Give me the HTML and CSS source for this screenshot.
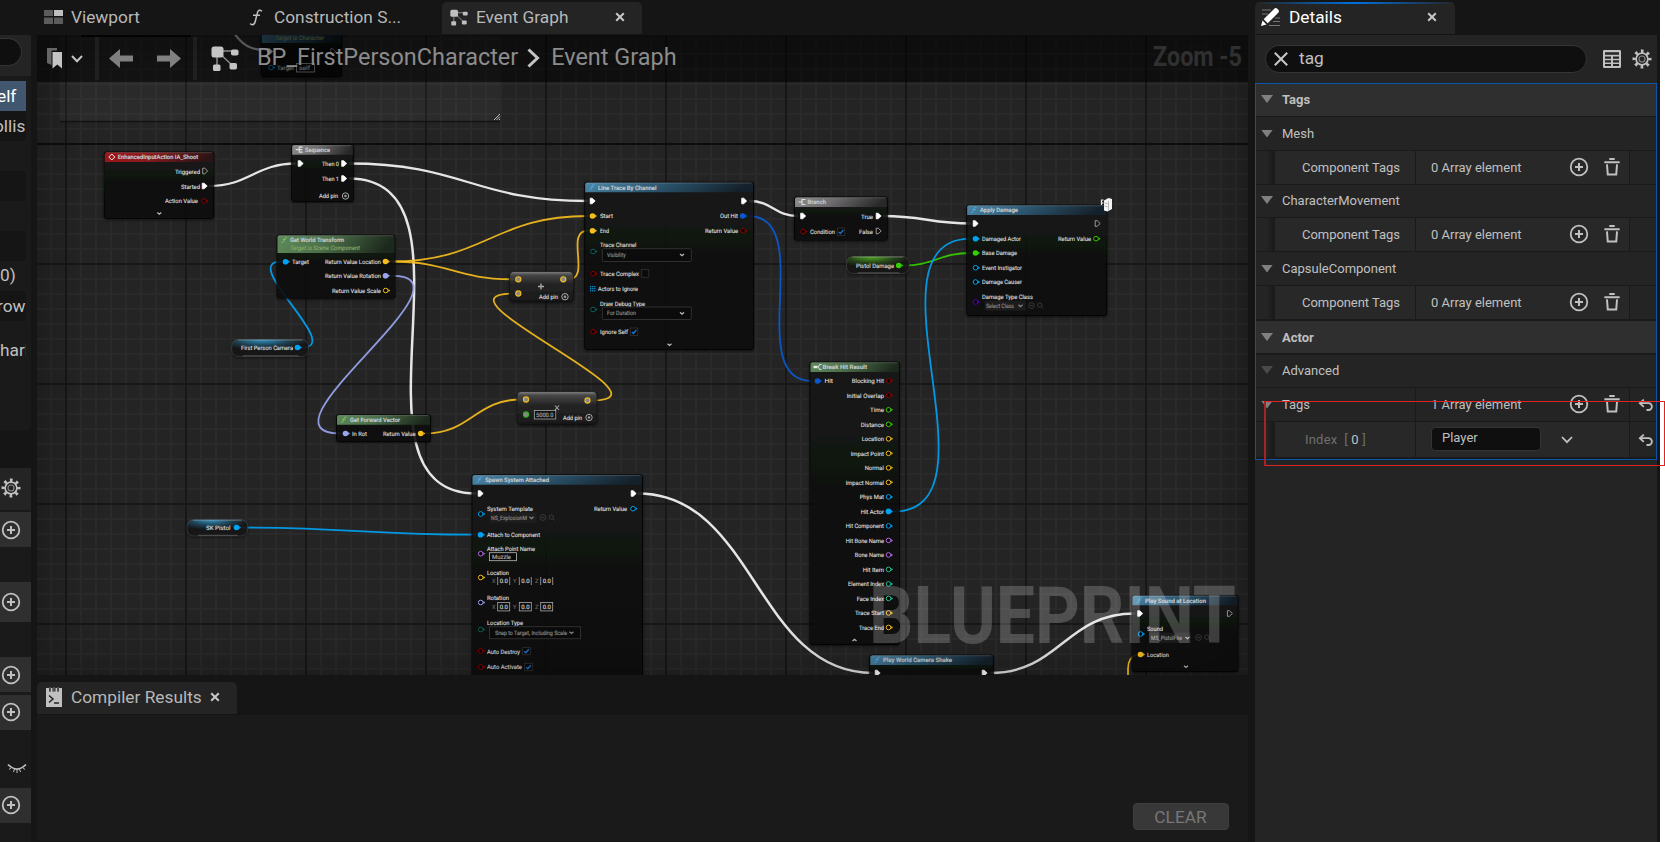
FILE: index.html
```html
<!DOCTYPE html>
<html lang="en">
<head>
<meta charset="utf-8">
<title>BP_FirstPersonCharacter</title>
<link rel="stylesheet" href="styles.css">
</head>
<body>
<svg class="defs" width="0" height="0">
  <symbol id="i-plus" viewBox="0 0 20 20"><circle cx="10" cy="10" r="8.3" fill="none" stroke="#c0c0c0" stroke-width="1.8"/><path d="M10 6v8M6 10h8" stroke="#c0c0c0" stroke-width="2"/></symbol>
  <symbol id="i-trash" viewBox="0 0 20 20"><path d="M7 1.2h6M1.5 4.6h17" stroke="#c0c0c0" stroke-width="2.2"/><path d="M4.4 7l.9 11.4h9.4L15.6 7" fill="none" stroke="#c0c0c0" stroke-width="2.2"/></symbol>
  <symbol id="i-gear" viewBox="0 0 20 20"><circle cx="10" cy="10" r="7.7" fill="none" stroke="#c0c0c0" stroke-width="3.6" stroke-dasharray="2.6 3.447" stroke-dashoffset="1.3"/><circle cx="10" cy="10" r="5.9" fill="none" stroke="#c0c0c0" stroke-width="1.7"/><circle cx="10" cy="10" r="3" fill="none" stroke="#8a8a8a" stroke-width="1.1"/></symbol>
  <symbol id="i-x" viewBox="0 0 10 10"><path d="M1.2 1.2l7.6 7.6M8.8 1.2L1.2 8.8" stroke="#c8c8c8" stroke-width="2"/></symbol>
  <symbol id="i-graph" viewBox="0 0 28 25"><path d="M6 5h17M6 5v17M6 5l16 15" fill="none" stroke="#8a8a8a" stroke-width="1.5"/><rect x="0.5" y="0.5" width="12" height="11" rx="2.5"/><rect x="20" y="3.5" width="7.5" height="6" rx="1.8"/><rect x="18.5" y="17" width="7.5" height="6.5" rx="1.8"/><rect x="2" y="18.5" width="7.5" height="6.5" rx="1.5"/></symbol>
  <symbol id="i-reset" viewBox="0 0 16 12"><path d="M2 4.2h8.500a3.400 3.400 0 0 1 0 6.800H8.500" fill="none" stroke="#c0c0c0" stroke-width="1.800"/><path d="M5.800.6L1.800 4.200l4 3.600" fill="none" stroke="#c0c0c0" stroke-width="1.800"/></symbol>
</svg>

<div class="editor">
  <aside class="side">
    <div class="side-search"><div class="side-field"></div></div>
    <div class="tree">
      <div class="tree-row selected">elf</div>
      <div class="tree-row alt t-ollis">ollis</div>
      <div class="tree-row"></div>
      <div class="tree-row alt"></div>
      <div class="tree-row"></div>
      <div class="tree-row alt"></div>
      <div class="tree-row t0">0)</div>
      <div class="tree-row alt t1">row</div>
      <div class="tree-row tall">harl</div>
    </div>
    <div class="side-block gear"><svg width="20" height="20"><use href="#i-gear"/></svg></div>
    <div class="side-block add s1"><svg width="20" height="20"><use href="#i-plus"/></svg></div>
    <div class="side-block add s2"><svg width="20" height="20"><use href="#i-plus"/></svg></div>
    <div class="side-block add s3"><svg width="20" height="20"><use href="#i-plus"/></svg></div>
    <div class="side-block add s4"><svg width="20" height="20"><use href="#i-plus"/></svg></div>
    <div class="side-eye"><svg width="20" height="12" viewBox="0 0 20 12"><path d="M1 1.500q9 9 18 0" fill="none" stroke="#c0c0c0" stroke-width="1.700"/><path d="M4.500 4.500L2 6.500M7.500 6L6.500 9M10 6.500V10M12.500 6L13.500 9M15.500 4.500L18 6.500" stroke="#c0c0c0" stroke-width="1"/></svg></div>
    <div class="side-block add s5"><svg width="20" height="20"><use href="#i-plus"/></svg></div>
  </aside>

  <main class="center">
    <nav class="tabs">
      <div class="tab viewport">
        <svg width="19" height="14"><path fill="#5c5c5c" d="M0 0h9v6H0zM0 7.500h9V14H0zM10 7.500h9V14h-9z"/><path fill="#c0c0c0" d="M10 0h9v6h-9z"/></svg>
        <span>Viewport</span>
      </div>
      <div class="tab construct">
        <svg width="14" height="17" viewBox="0 0 14 17"><path d="M12.800 2.300Q12 .8 10.200 1.300 8.800 1.800 8.200 4.500L6.300 12.200Q5.500 15.600 3.400 15.700 1.800 15.700 1.200 14.500M4 6.300h7" fill="none" stroke="#c0c0c0" stroke-width="1.500"/></svg>
        <span>Construction S...</span>
      </div>
      <div class="tab active">
        <svg width="18" height="17" fill="#c0c0c0"><use href="#i-graph"/></svg>
        <span>Event Graph</span>
        <svg class="close" width="10" height="10"><use href="#i-x"/></svg>
      </div>
    </nav>
    <section class="canvas">
      <svg id="graph" viewBox="37 35 1211 640" width="1211" height="640"></svg>
      <div class="vignette"></div>
      <div class="toolbar">
        <svg class="book" width="16" height="21" viewBox="0 0 16 21"><path fill="#666" d="M0 0h10v2.500H4.500V17L0 15z"/><path fill="#c4c4c4" d="M5.500 4h9.500v16.500l-4.700-4-4.800 4z"/></svg>
        <svg class="drop" width="12" height="8"><path d="M1 1l5 5.200L11 1" fill="none" stroke="#c4c4c4" stroke-width="2"/></svg>
        <i class="sep"></i>
        <svg class="arrow" width="24" height="19"><path d="M0 9.500L11 0v6.500h13v6H11V19z" fill="#808080"/></svg>
        <svg class="arrow" width="24" height="19"><path d="M24 9.500L13 0v6.500H0v6h13V19z" fill="#808080"/></svg>
        <i class="sep two"></i>
        <svg class="gicon" width="28" height="25" fill="#c4c4c4"><use href="#i-graph"/></svg>
        <span class="crumb">BP_FirstPersonCharacter</span>
        <svg class="chev" width="13" height="20"><path d="M1.500 1.500L10.500 10l-9 8.500" fill="none" stroke="#c4c4c4" stroke-width="3"/></svg>
        <span class="crumb">Event Graph</span>
      </div>
      <svg class="marks" viewBox="37 35 1211 640" width="1211" height="640">
        <text x="1153" y="66" textLength="89" lengthAdjust="spacingAndGlyphs" class="zoom">Zoom -5</text>
        <text x="869" y="643" textLength="367" lengthAdjust="spacingAndGlyphs" class="brand">BLUEPRINT</text>
      </svg>
    </section>
    <div class="results-tabs">
      <div class="results-tab">
        <svg width="16" height="20" viewBox="0 0 16 20"><path fill="#c0c0c0" d="M0 1h3v3.500h2V1h1.500v3.500h3V1H11v3.500h2V1h3v19H0z"/><path fill="#666" d="M3.500 0h1.300v4H3.500zM7.300 0h1.300v4H7.300zM11.200 0h1.300v4h-1.300z"/><path d="M3 8.500l4 3.500-4 3.500M8 16h5" fill="none" stroke="#222" stroke-width="1.500"/></svg>
        <span>Compiler Results</span>
        <svg class="close" width="10" height="10"><use href="#i-x"/></svg>
      </div>
    </div>
    <section class="results"><button class="clear">CLEAR</button></section>
  </main>

  <aside class="details">
    <div class="details-tabs">
      <div class="details-tab">
        <svg width="20" height="19" viewBox="0 0 20 19"><path d="M1 2h9M1 6h6M14 10h5M12 13.500h7M8 17.500h11" stroke="#777" stroke-width="1.200"/><path d="M0 18l1.500-5.500 4 4zM2.700 11.300L13.500.5q1.500-1 2.800.3l1 1q1.200 1.300.2 2.700L6.700 15.300z" fill="#fff"/></svg>
        <span>Details</span>
        <svg class="close" width="10" height="10"><use href="#i-x"/></svg>
      </div>
    </div>
    <div class="details-search">
      <div class="field"><svg width="14" height="14" viewBox="0 0 14 14"><path d="M.8.800l12.400 12.400M13.200.800L.8 13.200" stroke="#c8c8c8" stroke-width="2"/></svg><span>tag</span></div>
      <svg width="18" height="18" viewBox="0 0 18 18"><path fill="#c0c0c0" fill-rule="evenodd" d="M1.200 0h15.600q1.200 0 1.200 1.200v15.600q0 1.200-1.200 1.200H1.200Q0 18 0 16.800V1.200Q0 0 1.200 0zM2 2.200v2.600h14V2.200zM2 6.500v2.300h6V6.500zM10 6.500v2.300h6V6.500zM2 10.300v2.200h6v-2.200zM10 10.300v2.200h6v-2.200zM2 14v2h6v-2zM10 14v2h6v-2z"/></svg>
      <svg class="cog" width="20" height="20"><use href="#i-gear"/></svg>
    </div>
    <div class="props">
      <div class="cat up"><i class="tri"></i>Tags</div>
      <div class="group"><i class="tri"></i>Mesh</div>
      <div class="prop"><i class="indent"></i><div class="name">Component Tags</div><div class="value"><span>0 Array element</span><svg class="p" width="20" height="20"><use href="#i-plus"/></svg><svg width="18" height="20"><use href="#i-trash"/></svg></div><div class="reset"></div></div>
      <div class="group g2 up"><i class="tri"></i>CharacterMovement</div>
      <div class="prop"><i class="indent"></i><div class="name">Component Tags</div><div class="value"><span>0 Array element</span><svg class="p" width="20" height="20"><use href="#i-plus"/></svg><svg width="18" height="20"><use href="#i-trash"/></svg></div><div class="reset"></div></div>
      <div class="group"><i class="tri"></i>CapsuleComponent</div>
      <div class="prop"><i class="indent"></i><div class="name">Component Tags</div><div class="value"><span>0 Array element</span><svg class="p" width="20" height="20"><use href="#i-plus"/></svg><svg width="18" height="20"><use href="#i-trash"/></svg></div><div class="reset"></div></div>
      <div class="cat actor"><i class="tri"></i>Actor</div>
      <div class="group adv up"><i class="tri dim"></i>Advanced</div>
      <div class="prop tags"><div class="name wide"><i class="tri"></i>Tags</div><div class="value"><span>1 Array element</span><svg class="p" width="20" height="20"><use href="#i-plus"/></svg><svg width="18" height="20"><use href="#i-trash"/></svg></div><div class="reset"><svg width="16" height="12"><use href="#i-reset"/></svg></div></div>
      <div class="prop index"><i class="indent"></i><div class="name">Index&nbsp; [ <b>0</b> ]</div><div class="value"><div class="input">Player</div><svg class="dd" width="12" height="8"><path d="M1 1l5 5.200L11 1" fill="none" stroke="#c0c0c0" stroke-width="1.800"/></svg></div><div class="reset"><svg width="16" height="12"><use href="#i-reset"/></svg></div></div>
    </div>
  </aside>
  <div class="strip"></div>
  <div class="marker"></div>
</div>
<script src="graph.js"></script>
</body>
</html>
```

FILE: styles.css
```css
* { box-sizing: border-box; }
body { margin: 0; background: #151515; color: #c0c0c0; font-family: Roboto, "Liberation Sans", sans-serif; font-size: 13px; overflow: hidden; }
svg { display: block; flex: none; }
.defs { position: absolute; }
.editor { position: relative; display: flex; width: 1665px; height: 842px; background: #151515; }

/* left strip of the components panel */
.side { width: 31px; margin-right: 6px; padding-top: 35px; display: flex; flex-direction: column; overflow: hidden; flex: none; background: linear-gradient(#151515 468px, #1a1a1a 468px); }
.side-search { height: 41px; background: #242424; padding-top: 3px; flex: none; }
.side-field { width: 22px; height: 28px; background: #0f0f0f; border: 1px solid #343434; border-left: 0; border-radius: 0 14px 14px 0; }
.tree { height: 354px; margin-bottom: 38px; background: #1a1a1a; padding-top: 5px; border-radius: 0 4px 4px 0; flex: none; overflow: hidden; }
.tree-row { width: 26px; height: 30px; line-height: 30px; font-size: 17.3px; white-space: nowrap; overflow: hidden; color: #c0c0c0; }
.tree-row.alt { background: #151515; }
.tree-row.selected { background: #40576f; color: #fff; text-indent: -3px; }
.tree-row.t-ollis { text-indent: -6px; }
.tree-row.t0 { line-height: 28px; }
.tree-row.t1 { text-indent: -3px; }
.tree-row.tall { height: 60px; line-height: 58px; }
.side-block { height: 35px; padding-left: 1px; display: flex; align-items: center; background: #2f2f2f; flex: none; }
.side-block.gear { height: 42px; padding-bottom: 2px; background: #242424; }
.s1 { margin-top: 2px; }
.side-block.s2 { margin-top: 35px; height: 40px; }
.s3 { margin-top: 35px; }
.side-block.s4 { margin-top: 3px; padding-bottom: 1px; }
.side-block.s5 { padding-bottom: 1px; }
.side-eye { height: 58px; padding: 33px 0 0 7px; flex: none; }

/* graph column */
.center { width: 1211px; display: flex; flex-direction: column; flex: none; }
.tabs { height: 35px; padding-top: 2px; display: flex; flex: none; }
.tab, .results-tab, .details-tab { height: 32px; display: flex; align-items: center; font-size: 17.3px; color: #b8b8b8; border-radius: 5px 5px 0 0; white-space: nowrap; }
.tab { padding-bottom: 2px; }
.tab.viewport { width: 200px; padding-left: 7px; gap: 8px; }
.tab.construct { width: 205px; padding-left: 12px; gap: 11px; }
.tab.active { width: 200px; padding: 0 17px 2px 8px; gap: 8px; background: #242424; }
.close { margin-left: auto; }
.canvas { position: relative; height: 640px; background: #242424; overflow: hidden; flex: none; }
.vignette { position: absolute; inset: 0; box-shadow: inset 0 0 60px rgba(0,0,0,.35); }
.toolbar { position: absolute; top: 0; left: 0; right: 0; height: 47px; display: flex; align-items: center; padding-left: 10px; background: rgba(0,0,0,.55); }
.drop { margin-left: 8px; }
.sep { width: 4px; height: 43px; margin: 0 10px 0 12px; background: rgba(60,60,60,.32); }
.arrow { margin-top: -1px; }
.arrow + .arrow { margin-left: 24px; }
.sep.two { margin: 0 14px 0 12px; }
.crumb { font-size: 23.45px; color: #8c8c8c; margin-top: -3px; white-space: nowrap; }
.gicon { margin-right: 18px; margin-top: -1px; }
.chev { margin: -1px 11px 0 9px; }
.marks { position: absolute; inset: 0; }
.zoom { font: bold 28px Roboto, sans-serif; fill: #303030; }
.brand { font: bold 80px Roboto, sans-serif; fill: rgba(255,255,255,.2); }
.results-tabs { height: 40px; padding-top: 7px; flex: none; }
.results-tab { width: 200px; padding: 0 18px 2px 9px; gap: 9px; background: #242424; }
.results-tab .close { margin-left: -1px; }
.results { height: 126px; background: #1a1a1a; display: flex; justify-content: flex-end; align-items: flex-end; padding: 0 19px 11px; flex: none; }
.clear { width: 96px; height: 27px; border: 1px solid #3e3e3e; border-radius: 4px; background: #383838; color: #777; font: 17.3px Roboto, sans-serif; padding: 0 1px 0 0; }

/* node text */
#graph text { font-family: Roboto, sans-serif; text-rendering: geometricPrecision; }

/* details panel */
.details { width: 402px; margin-left: 7px; display: flex; flex-direction: column; flex: none; background: linear-gradient(#151515 35px, #242424 35px); }
.details-tabs { height: 35px; padding-top: 2px; flex: none; }
.details-tab { position: relative; width: 200px; padding: 0 18px 2px 6px; gap: 8px; background: #242424; color: #fff; overflow: hidden; }
.details-tab::before { content: ""; position: absolute; top: 0; left: 0; right: 0; height: 2px; background: linear-gradient(90deg, #242424, #0070e0 50%, #242424); }
.details-search { height: 48px; display: flex; align-items: center; padding-left: 10px; flex: none; }
.field { width: 322px; height: 28px; margin-right: 16px; display: flex; align-items: center; gap: 11px; padding-left: 8px; background: #0f0f0f; border: 1px solid #353535; border-radius: 14px; font-size: 17.3px; line-height: 20px; }
.field span { margin-top: -2px; }
.cog { margin-left: 11px; }
.props { height: 377px; border: 1px solid #0b56a4; background: #1a1a1a; flex: none; }
.cat, .group { height: 33px; margin-bottom: 1px; display: flex; align-items: center; padding-left: 5px; background: #242424; }
.cat { height: 32px; background: #2f2f2f; font-weight: bold; }
.cat.up, .group.up { padding-bottom: 2px; }
.tri { width: 12px; height: 8px; margin-right: 9px; background: #808080; clip-path: polygon(0 0, 100% 0, 50% 100%); flex: none; }
.tri.dim { background: #4a4a4a; }
.prop { height: 33px; display: flex; margin-bottom: 1px; gap: 1px; }
.indent { width: 18px; background: linear-gradient(90deg, #242424 60%, #1a1a1a); }
.name { width: 140px; display: flex; align-items: center; padding-left: 27px; background: #282828; white-space: pre; letter-spacing: -.05px; }
.name.wide { width: 159px; padding-left: 5px; background: #242424; }
.value { width: 213px; display: flex; align-items: center; padding-left: 15px; background: #282828; }
.value .p { margin: -1px 14px 0 auto; }
.value svg:last-child { margin-right: 8px; margin-top: -1px; }
.reset { flex: 1; display: flex; align-items: center; padding-left: 8px; background: #242424; }
.g2 { height: 32px; margin-top: 1px; }
.cat.actor { margin: 2px 0; height: 32px; }
.group.adv { height: 32px; }
.tags .value { background: #242424; }
.index { height: 35px; }
.index .name { color: #6f6f6f; padding-left: 30px; letter-spacing: .2px; }
.index b { color: #c0c0c0; font-weight: normal; }
.input { width: 110px; height: 24px; margin-top: -1px; border: 1px solid #343434; border-radius: 4px; background: #0f0f0f; padding-left: 10px; line-height: 20px; }
.value svg.dd { margin: 0 0 0 20px; }
.strip { width: 5px; margin-left: 3px; background: #fff; flex: none; }
.marker { position: absolute; left: 1264px; top: 401px; width: 401px; height: 65px; border: 1px solid #df2222; border-left: 2px solid #a92326; }
```

FILE: graph.js
```js
const C = { white: '#f6f6f6', yellow: '#f5bd1e', lav: '#99a5f0', blue: '#00a2f2', deep: '#0a59d0', green: '#35d000', red: '#8e0000', teal: '#0a665a', purple: '#5a00b8', pink: '#b868e8', mint: '#1cc493' };
const out = [];
const add = s => out.push(s);

// background grid
for (let x = 51 - 15; x < 1250; x += 15) add(`<rect x="${x - 1}" y="35" width="2" height="640" fill="#2a2a2a"/>`);
for (let y = 39; y < 676; y += 15) add(`<rect x="37" y="${y - 1}" width="1211" height="2" fill="#2a2a2a"/>`);
for (let x = 66; x < 1250; x += 120) add(`<rect x="${x - 1}" y="35" width="2" height="640" fill="#171717"/>`);
for (let y = 144; y < 676; y += 120) add(`<rect x="37" y="${y - 1}" width="1211" height="2" fill="${y === 144 ? '#0d0d0d' : '#171717'}"/>`);

add(`<defs>
<linearGradient id="body" x2="0" y2="1"><stop stop-color="#171918"/><stop offset=".35" stop-color="#101210"/><stop offset="1" stop-color="#090b09"/></linearGradient>
<linearGradient id="math" x2="0" y2="1"><stop stop-color="#8a8a8a"/><stop offset=".12" stop-color="#484848"/><stop offset=".4" stop-color="#252525"/><stop offset="1" stop-color="#181818"/></linearGradient>
<filter id="sh" x="-10%" y="-10%" width="120%" height="125%"><feDropShadow dx="0" dy="1" stdDeviation="1.5" flood-opacity=".7"/></filter>`);
const heads = { red: ['#a01418', '#8a1a1c', '#2c1414'], gray: ['#8c8c8c', '#6e6c6e', '#282828'], green: ['#5f8a5c', '#4c704a', '#1c281c'], blue: ['#4e87a8', '#2d5872', '#14202a'] };
for (const k in heads) add(`<linearGradient id="h-${k}" x2="1" y2=".12"><stop stop-color="${heads[k][0]}"/><stop offset=".45" stop-color="${heads[k][1]}"/><stop offset="1" stop-color="${heads[k][2]}"/></linearGradient>`);
for (const [k, c] of [['cyan', '#2e95c8'], ['lime', '#4fae22']]) add(`<radialGradient id="p-${k}" cx=".4" cy="0" r=".62"><stop stop-color="${c}"/><stop offset=".6" stop-color="${c}" stop-opacity=".3"/><stop offset="1" stop-color="${c}" stop-opacity="0"/></radialGradient>`);
add('</defs>');

const text = (s, x1, x2, c, fill = '#d4d4d4', o = '') => add(`<text x="${x1}" y="${c + 2.1}" font-size="6" textLength="${x2 - x1}" lengthAdjust="spacingAndGlyphs" fill="${fill}" stroke="${fill}" stroke-width=".15" ${o}>${s}</text>`);
const rect = (x, y, w, h, fill, stroke = 'none', o = '') => add(`<rect x="${x}" y="${y}" width="${w}" height="${h}" fill="${fill}" stroke="${stroke}" ${o}/>`);
function wire(x1, y1, x2, y2, t, col, w = 1.8) {
  add(`<path d="M${x1} ${y1}C${x1 + t} ${y1} ${x2 - t} ${y2} ${x2} ${y2}" fill="none" stroke="${col}" stroke-width="${w}" opacity=".92"/>`);
}
function pin(x, y, col, full) {
  add(`<circle cx="${x}" cy="${y}" r="${full ? 2.8 : 2.3}" fill="${full ? col : '#050505'}" stroke="${col}" stroke-width="${full ? 0 : 1}"/><path d="M${x + 2.7} ${y - 1.5}l1.800 1.500-1.800 1.500z" fill="${col}"/>`);
}
function exec(x, y, full = 1) {
  add(`<path d="M${x - 2.3} ${y - 2.8}h2l3 2.800-3 2.800h-2z" fill="${full ? '#fff' : 'none'}" stroke="${full ? '#fff' : '#bbb'}" stroke-width=".8"/>`);
}
const chev = (x, y, up, c = '#bbb') => add(`<path d="M${x - 2} ${y + (up ? 1 : -1)}l2 ${up ? -1.8 : 1.8} 2 ${up ? 1.8 : -1.8}" fill="none" stroke="${c}" stroke-width="1.200"/>`);
function node(x, y, x2, y2, col, title, tx, tx2, hh = 10) {
  const w = x2 - x, h = y2 - y;
  add(`<rect x="${x}" y="${y}" width="${w}" height="${h}" rx="2" fill="url(#body)" stroke="#050505" stroke-width=".8" opacity=".9" filter="url(#sh)"/>`);
  add(`<path d="M${x + .5} ${y + hh}v${-hh + 2}q0-1.500 1.500-1.500h${w - 4}q1.500 0 1.500 1.500v${hh - 2}z" fill="url(#h-${col})"/><path d="M${x + 2} ${y + .7}h${w - 4}" stroke="#fff" stroke-opacity=".25" stroke-width=".7"/>`);
  if (title) text(title, tx, tx2, y + 5.2, '#c6ccd0', 'font-weight="500"');
  const ix = x + 7, iy = y + 5;
  if (col === 'blue' || title.startsWith('Get')) add(`<path d="M${ix + 3} ${iy - 2.600}q-2-.8-2.500 1.300l-.8 2.600q-.5 1.800-2.200 1.200M${ix - 1.300} ${iy - .4}h3.400" fill="none" stroke="${col === 'blue' ? '#4fa8dc' : '#78c060'}" stroke-width="1"/>`);
  else if (col === 'red') add(`<path d="M${ix + .5} ${iy - 3}l-3 3 3 3M${ix + .5} ${iy - 3}l3 3-3 3" fill="none" stroke="#eee" stroke-width="1"/>`);
  else if (title.startsWith('Break')) add(`<path d="M${ix - 3.500} ${iy - 1.200}h4v2.400h-4z" fill="#eee"/><path d="M${ix + 1} ${iy}l2-2.500h1.500M${ix + 1} ${iy}l2 2.500h1.500" fill="none" stroke="#ddd" stroke-width="1.100"/>`);
  else add(`<path d="M${ix - 3} ${iy}h3M${ix + 4} ${iy - 2.500}h-3.500v5H${ix + 4}${title === 'Sequence' ? `M${ix + .5} ${iy}h3` : ''}" fill="none" stroke="#ddd" stroke-width="1.200"/>`);
}
function pill(x, y, x2, y2, k, s, a, b, px, py, col) {
  const a2 = `x="${x}" y="${y}" width="${x2 - x}" height="${y2 - y}" rx="6.500"`;
  add(`<rect ${a2} fill="#151718" opacity=".93" filter="url(#sh)"/><rect ${a2} fill="url(#p-${k})"/><path d="M${x + 6} ${y + .5}H${x2 - 6}" stroke="#aaa" stroke-opacity=".6" stroke-width=".8"/><rect ${a2} fill="none" stroke="#777" stroke-opacity=".45" stroke-width=".7"/><path d="M${x + 11} ${y2 - .7}H${x2 - 10}" stroke="#999" stroke-opacity=".6" stroke-width=".7"/>`);
  text(s, a, b, py + .5); pin(px, py, col, 1);
}
const check = (x, y, on = 1) => { rect(x, y, 7.5, 7.5, '#0a0a0a', '#3a3a3a', 'stroke-width=".7"'); if (on) add(`<path d="M${x + 1.500} ${y + 4}l1.600 1.500 3-3.500" fill="none" stroke="#1a74d8" stroke-width="1.400"/>`); };
const addIcon = (x, y) => add(`<circle cx="${x}" cy="${y}" r="3.200" fill="none" stroke="#b5b5b5" stroke-width=".9"/><circle cx="${x}" cy="${y}" r="1.300" fill="#999"/>`);
const tools = (x, y) => add(`<g fill="none" stroke="#3c3c3c" stroke-width=".9"><circle cx="${x}" cy="${y}" r="2.900"/><path d="M${x - 1.500} ${y}h3"/><circle cx="${x + 8.300}" cy="${y - .4}" r="2.200"/><path d="M${x + 10} ${y + 1.400}l1.800 1.600"/></g>`);
const mpin = (x, y, c = C.yellow) => add(`<circle cx="${x}" cy="${y}" r="2.600" fill="#888" stroke="${c}" stroke-width="1.100"/>`);

// comment box
add('<rect x="59.500" y="20" width="440.500" height="101" rx="2" fill="#fff" fill-opacity=".035"/><path d="M60 121.500H500" stroke="#101010" stroke-opacity=".8" stroke-width="1.500"/><path d="M494 120l6-6M496.500 120l3.500-3.500M499 120l1-1" stroke="#ccc" stroke-width=".9"/>');

// wires
wire(209, 186, 296, 163.5, 40, C.white, 2.3);
wire(349, 163.5, 588, 201, 115, C.white, 2.3);
wire(349, 178.5, 476, 493.5, 142, C.white, 2.5);
wire(749, 201, 798, 216, 24, C.white, 2.3);
wire(883, 216, 971, 223.5, 40, C.white, 2.3);
wire(638, 493.5, 873, 673, 117, C.white, 2.5);
wire(990, 673, 1135, 613.5, 70, C.white, 2.5);
wire(391, 261.5, 588, 216, 95, C.yellow);
wire(391, 261.5, 514, 279.3, 60, C.yellow);
wire(568, 279.3, 588, 230.7, 24, C.yellow);
wire(592, 400.5, 513, 293.5, 90, C.yellow);
wire(425, 433.5, 521, 399.5, 46, C.yellow);
wire(391, 275.7, 341, 433.5, 95, C.lav);
wire(302, 347.5, 281, 261.7, 43, C.blue);
wire(241, 527.5, 476, 534.7, 110, C.blue);
wire(748, 216, 812, 381, 70, C.deep);
wire(903, 265.5, 971, 253, 32, C.green);
wire(893, 511.7, 971, 238.7, 114, C.blue);
add(`<path d="M1128 676v-7q0-12 9-14.500" fill="none" stroke="${C.yellow}" stroke-width="1.800"/><path d="M234 33C243 46 251 50 270 51" fill="none" stroke="#ddd" stroke-width="2.200"/>`);

// nodes partly behind the toolbar
rect(81, 20, 110, 17, '#0a0a0a');
node(261.3, 25, 341.5, 76.5, 'blue', '', 270, 271, 18);
text('Target is Character', 275, 324, 38, '#8fae7a', 'font-style="italic"');
exec(270, 51.5); exec(333, 51.5, 0); pin(271, 67.500, C.blue); text('Target', 277, 294, 68); rect(296.5, 63.5, 18, 8.5, 'none', '#ccc', 'stroke-width=".8"'); text('self', 299, 310, 67.5);

node(104.3, 152, 213.7, 218.5, 'red', 'EnhancedInputAction IA_Shoot', 117.7, 198.3);
text('Triggered', 175, 200, 172); exec(205, 171, 0); text('Started', 181, 200, 187); exec(204.5, 186); text('Action Value', 165, 198, 201); pin(204, 201, C.red); chev(159.3, 213.5);

node(291.7, 144.7, 353.3, 201.5, 'gray', 'Sequence', 305, 330);
exec(300.5, 163.5); text('Then 0', 322, 339, 164); exec(344, 163.5); text('Then 1', 322, 339, 179); exec(344, 178.5); text('Add pin', 319, 338, 196); addIcon(345.5, 196);

node(277, 235, 395, 298, 'green', 'Get World Transform', 290, 344, 18);
text('Target is Scene Component', 290, 360, 248, '#86a866', 'font-style="italic"');
pin(285.5, 261.7, C.blue, 1); text('Target', 292, 309, 262); text('Return Value Location', 325, 381, 262); pin(385.5, 261.5, C.yellow, 1);
text('Return Value Rotation', 325, 381, 276); pin(385.5, 275.7, C.lav, 1); text('Return Value Scale', 332, 381, 291); pin(385.7, 290.5, C.yellow);

pill(231.7, 339.5, 308.5, 356.5, 'cyan', 'First Person Camera', 241, 293, 297.5, 347.5, C.blue);
node(336.5, 414.7, 430.5, 441.5, 'green', 'Get Forward Vector', 350, 400);
pin(345.5, 433.5, C.lav, 1); text('In Rot', 352, 367, 434); text('Return Value', 383, 415.5, 434); pin(420.7, 433.5, C.yellow, 1);

for (const [x, y, w, h] of [[509.5, 271.5, 64, 30], [517, 391.5, 80, 33]]) add(`<rect x="${x}" y="${y}" width="${w}" height="${h}" rx="4.500" fill="url(#math)" stroke="#111" stroke-width=".7" opacity=".94" filter="url(#sh)"/>`);
mpin(518.3, 279.3); mpin(518.3, 293.5); mpin(563.3, 279.3);
add('<path d="M541 283.500v6M538 286.500h6" stroke="#aaa" stroke-width="1.300"/>');
text('Add pin', 539, 558, 297); addIcon(565, 296.7);
mpin(526, 399.5); mpin(526, 414.5, '#35b020'); mpin(587.5, 400.5);
add('<path d="M555 405.500l4 4.500M559 405.500l-4 4.500" stroke="#aaa" stroke-width="1.100"/>');
rect(534.3, 410.5, 21.5, 8.5, '#111', '#bbb', 'stroke-width=".7"'); text('5000.0', 536, 553.5, 415, '#aaa'); text('Add pin', 563, 582, 418); addIcon(589, 417.5);

node(584.7, 182.3, 753.5, 349.5, 'blue', 'Line Trace By Channel', 598, 656.5);
exec(592.5, 201); exec(744, 201); pin(592.5, 216, C.yellow, 1); text('Start', 600, 613, 216); pin(592.5, 230.7, C.yellow, 1); text('End', 600, 609, 231);
text('Out Hit', 720, 738, 216); pin(742.7, 216, C.deep, 1); text('Return Value', 705, 738, 231); pin(743, 230.7, C.red);
text('Trace Channel', 600, 636.5, 245); pin(593, 251.5, C.teal); rect(602.3, 248.7, 89, 12.8, '#0b0b0b', '#303030', 'rx="1"'); text('Visibility', 607, 625.5, 255, '#8c8c8c'); chev(682, 255);
pin(593, 273.7, C.red); text('Trace Complex', 600, 639, 274); check(641.3, 269.7, 0);
for (let i = 0; i < 9; i++) rect(590 + (i % 3) * 2.1, 286 + Math.floor(i / 3) * 2.1, 1.2, 1.2, C.blue);
text('Actors to Ignore', 598, 638, 289); text('Draw Debug Type', 600, 645, 304); pin(593, 309.5, C.teal); rect(602.3, 307, 89, 12.5, '#0b0b0b', '#303030', 'rx="1"'); text('For Duration', 607, 636, 313.3, '#8c8c8c'); chev(682, 313.3);
pin(593, 331.7, C.red); text('Ignore Self', 600, 628, 332); check(630.3, 328); chev(669.5, 344.7);

node(794.5, 197, 887.3, 240, 'gray', 'Branch', 807.5, 826);
exec(803, 216); text('True', 861, 873, 217); exec(878.5, 216); pin(803, 231.5, C.red); text('Condition', 810, 835, 232); check(837.3, 228); text('False', 859, 873, 232); exec(878.5, 231, 0);
pill(846.5, 256.5, 909.3, 273.5, 'lime', 'Pistol Damage', 856, 894, 898.7, 265.5, C.green);

node(966.7, 205, 1106.7, 315.5, 'blue', 'Apply Damage', 980, 1018);
exec(975.5, 223.5); exec(1097.5, 223.5, 0); pin(975.5, 238.7, C.blue, 1); text('Damaged Actor', 982, 1021, 239); text('Return Value', 1058, 1091, 239); pin(1096, 238.7, C.green);
pin(975.5, 253, C.green, 1); text('Base Damage', 982, 1017, 253); pin(975.5, 267.7, C.blue); text('Event Instigator', 982, 1022, 268); pin(975.5, 282, C.blue); text('Damage Causer', 982, 1022, 282);
text('Damage Type Class', 982, 1033, 297); pin(975.5, 302, C.purple); rect(984.7, 300.7, 41, 10, '#1c1c1c'); text('Select Class', 986, 1014, 306, '#888'); chev(1020.5, 305.8, 0, '#888'); tools(1031.5, 305.5);
add('<path d="M1101 200h2.500M1101 203h2.500M1101.500 200v5" stroke="#eee" stroke-width="1.200"/><path d="M1104 200.500l4.500-2.500 3.500 1v10l-4.500 2.500-3.500-1z" fill="#f4f4f4"/><path d="M1104.500 203l3 .8M1104.500 206l3 .8M1108.500 201v9.500" stroke="#999" stroke-width=".7"/>');

node(810, 362, 899.3, 644.5, 'green', 'Break Hit Result', 822.5, 867);
pin(817.5, 381, C.deep, 1); text('Hit', 824.5, 833, 381);
[['Blocking Hit', 851.7, C.red], ['Initial Overlap', 846.7, C.red], ['Time', 870, C.green], ['Distance', 860.7, C.green], ['Location', 861.7, C.yellow], ['Impact Point', 850.7, C.yellow], ['Normal', 864.7, C.yellow], ['Impact Normal', 845.7, C.yellow], ['Phys Mat', 859.7, C.blue], ['Hit Actor', 860.7, C.blue], ['Hit Component', 845.7, C.blue], ['Hit Bone Name', 845.7, C.pink], ['Bone Name', 854.7, C.pink], ['Hit Item', 862.7, C.mint], ['Element Index', 848, C.mint], ['Face Index', 856.7, C.mint], ['Trace Start', 855, C.yellow], ['Trace End', 859, C.yellow]]
  .forEach(([s, x, c], i) => { const y = 381 + i * 14.51; text(s, x, 884, y); pin(888.5, y - .2, c, s === 'Hit Actor'); });
chev(854.5, 640, 1);

node(869.8, 655, 993.3, 690, 'blue', 'Play World Camera Shake', 883, 952); exec(877.5, 673); exec(984.5, 673);

node(1132, 595.3, 1238, 671.5, 'blue', 'Play Sound at Location', 1145, 1206);
exec(1140, 613.5); exec(1229.7, 613.5, 0); text('Sound', 1147, 1163, 629); pin(1140.5, 634, C.blue); rect(1149, 632.5, 42, 10.5, '#1c1c1c'); text('MS_PistolFire', 1151, 1182, 638, '#999'); chev(1187.5, 638); tools(1198.500, 637.5);
pin(1140.5, 654.5, C.yellow, 1); text('Location', 1147, 1169, 655); chev(1186, 666.7);

node(472, 474.7, 642.5, 690, 'blue', 'Spawn System Attached', 485, 549);
exec(480.5, 493.5); exec(633.5, 493.5); text('System Template', 487, 533, 509); pin(480.7, 514, C.blue); text('Return Value', 594, 627, 509); pin(633, 508.7, C.blue);
rect(489.7, 512.3, 47, 10.5, '#1e1e1e'); text('NS_ExplosionM', 491, 527, 518, '#888'); chev(531.5, 517.8, 0, '#888'); tools(543, 517.5);
pin(480.5, 534.7, C.blue, 1); text('Attach to Component', 487, 540, 535); text('Attach Point Name', 487, 535, 549); pin(480.7, 553.7, C.pink); rect(489.5, 552.7, 27, 8, '#0a0a0a', '#bbb', 'stroke-width=".8"'); text('Muzzle', 492, 511, 557, '#aaa');
const xyz = (c, full) => [['X', 492], ['Y', 513], ['Z', 535]].forEach(([l, x], i) => {
  text(l, x, x + 3.5, c, '#666'); const b = [497.7, 519.3, 540.7][i];
  if (full) rect(b, c - 4.3, 12, 8.5, 'none', '#aaa', 'stroke-width=".8"'); else add(`<path d="M${b} ${c - 4}v8M${b + 12} ${c - 4}v8" stroke="#aaa" stroke-width=".8"/>`);
  text('0.0', b + 2, b + 10.3, c);
});
text('Location', 487, 509, 573); pin(480.7, 577.5, C.yellow); xyz(581, 0);
text('Rotation', 487, 509, 598); pin(480.7, 602.5, C.lav); xyz(606.7, 1);
text('Location Type', 487, 523, 623); pin(480.7, 629.5, C.teal); rect(489.5, 626.7, 91, 12, '#0b0b0b', '#303030'); text('Snap to Target, Including Scale', 495, 567, 633, '#8c8c8c'); chev(571.5, 632.7, 0, '#888');
pin(480.7, 651, C.red); text('Auto Destroy', 487, 520, 652); check(522.7, 647.3); pin(480.7, 667, C.red); text('Auto Activate', 487, 522, 667); check(524.7, 663.3);

pill(187, 519.7, 247.7, 536, 'cyan', 'SK Pistol', 206, 230.5, 236.5, 527.5, C.blue);

document.getElementById('graph').innerHTML = out.join('');
```
